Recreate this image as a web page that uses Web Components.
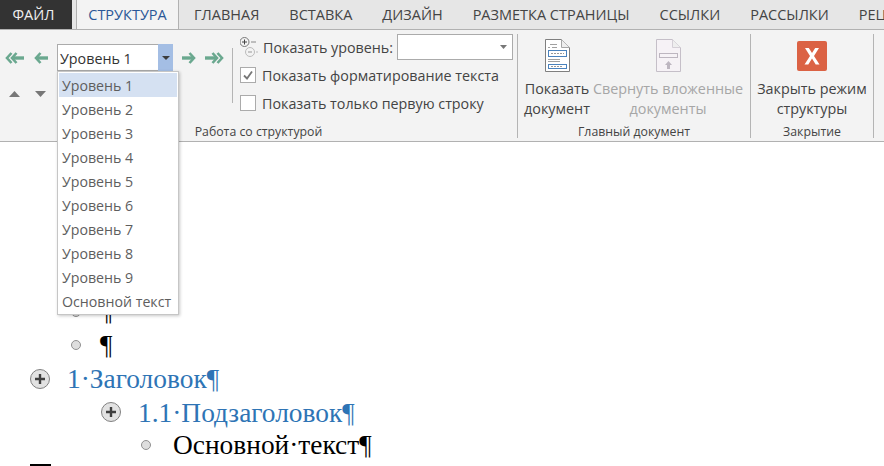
<!DOCTYPE html>
<html lang="ru">
<head>
<meta charset="utf-8">
<title>Структура</title>
<style>
  html, body { margin: 0; height: 100%; overflow: hidden; background: #fff; }
  body { font-family: "Open Sans", "Noto Sans", sans-serif; }
</style>
</head>
<body>
<word-app></word-app>

<script>
const UI_FONT = `"Open Sans", "Noto Sans", sans-serif`;

class WordTabs extends HTMLElement {
  connectedCallback() {
    this.attachShadow({ mode: 'open' });
    const tabs = ['ГЛАВНАЯ', 'ВСТАВКА', 'ДИЗАЙН', 'РАЗМЕТКА СТРАНИЦЫ', 'ССЫЛКИ', 'РАССЫЛКИ', 'РЕЦЕНЗИРОВАНИЕ'];
    this.shadowRoot.innerHTML = `
      <style>
        :host {
          display: flex;
          height: 30px;
          box-sizing: border-box;
          background: #e6e6e6;
          border-bottom: 1px solid #b1b1b1;
          font: 14.5px ${UI_FONT};
          color: #444;
          white-space: nowrap;
          overflow: hidden;
        }
        .file, .active, .tab { flex: none; }
        .file {
          width: 72px;
          height: 29px;
          box-sizing: border-box;
          padding-right: 5px;
          background: #333;
          color: #f0f0f0;
          display: flex;
          align-items: center;
          justify-content: center;
          margin-right: 4px;
        }
        .active {
          width: 103px;
          height: 30px;
          box-sizing: border-box;
          background: #f3f3f3;
          border: 1px solid #b1b1b1;
          border-width: 0 1px;
          color: #2b5797;
          display: flex;
          align-items: center;
          justify-content: center;
          padding-bottom: 1px;
        }
        .tab {
          display: flex;
          align-items: center;
          padding: 0 15px;
        }
      </style>
      <div class="file">ФАЙЛ</div>
      <div class="active">СТРУКТУРА</div>
      ${tabs.map(t => `<div class="tab">${t}</div>`).join('')}
    `;
  }
}
customElements.define('word-tabs', WordTabs);

class RibbonGroup extends HTMLElement {
  connectedCallback() {
    this.attachShadow({ mode: 'open' });
    this.shadowRoot.innerHTML = `
      <style>
        :host {
          display: flex;
          flex-direction: column;
          box-sizing: border-box;
          height: 104px;
          margin-top: 4px;
          border-right: 1px solid #b4b4b4;
        }
        .body { flex: 1; display: flex; min-height: 0; }
        .label {
          height: 13px;
          padding-top: 1px;
          line-height: 14px;
          text-align: center;
          font-size: 12.300px;
          color: #444;
          white-space: nowrap;
        }
      </style>
      <div class="body"><slot></slot></div>
      <div class="label">${this.getAttribute('label')}</div>
    `;
  }
}
customElements.define('ribbon-group', RibbonGroup);

class RibbonButton extends HTMLElement {
  connectedCallback() {
    this.attachShadow({ mode: 'open' });
    const disabled = this.hasAttribute('disabled');
    this.shadowRoot.innerHTML = `
      <style>
        :host {
          display: flex;
          flex-direction: column;
          align-items: center;
          font-size: 14.350px;
          line-height: 20px;
          color: ${disabled ? '#a6a6a6' : '#444'};
          text-align: center;
          white-space: nowrap;
        }
        .icon { height: 40px; padding-top: 5px; display: flex; justify-content: center; box-sizing: content-box; }
      </style>
      <div class="icon"><slot name="icon"></slot></div>
      <div><slot></slot></div>
    `;
  }
}
customElements.define('ribbon-button', RibbonButton);

class OutlineTools extends HTMLElement {
  connectedCallback() {
    this.attachShadow({ mode: 'open' });
    this.shadowRoot.innerHTML = `
      <style>
        :host {
          display: block;
          position: relative;
          width: 232px;
          height: 100%;
          box-sizing: border-box;
          font-size: 14.300px;
          color: #333;
        }
        .row { display: flex; align-items: center; }
        .top { padding: 10px 0 0 5px; }
        .bottom { padding: 20px 0 0 9px; gap: 15px; }
        .combo {
          width: 116px;
          height: 27px;
          margin: 0 9px 0 9px;
          box-sizing: border-box;
          background: #fff;
          border: 1px solid #ababab;
          display: flex;
          align-items: center;
          padding: 1px 0 0 2px;
          position: relative;
        }
        .combo span { flex: 1; }
        .drop {
          position: absolute;
          right: -1px;
          top: -1px;
          width: 15px;
          height: 27px;
          background: #a4bee4;
          display: flex;
          align-items: center;
          justify-content: center;
        }
        svg { display: block; }
        .arrow { fill: none; stroke: #6aa88f; }
      </style>
      <div class="row top">
        <svg width="19" height="12" viewBox="0 0 19 12"><g class="arrow" stroke-width="2.600"><path d="M6.500 1 2 6l4.500 5M11.500 1 7 6l4.500 5"/><path d="M8 6h11" stroke-width="3.400"/></g></svg>
        <svg style="margin-left:10px" width="14" height="12" viewBox="0 0 14 12"><g class="arrow" stroke-width="2.600"><path d="M6.500 1 2 6l4.500 5"/><path d="M3 6h11" stroke-width="3.400"/></g></svg>
        <div class="combo"><span>Уровень 1</span><div class="drop"><svg width="8" height="4" viewBox="0 0 8 4"><path d="M0 0h8L4 4z" fill="#3c3c3c"/></svg></div></div>
        <svg width="14" height="12" viewBox="0 0 14 12"><g class="arrow" stroke-width="2.600"><path d="M7.500 1 12 6l-4.500 5"/><path d="M0 6h11" stroke-width="3.400"/></g></svg>
        <svg style="margin-left:9px" width="19" height="12" viewBox="0 0 19 12"><g class="arrow" stroke-width="2.600"><path d="M7.500 1 12 6l-4.500 5M12.500 1 17 6l-4.500 5"/><path d="M0 6h11" stroke-width="3.400"/></g></svg>
      </div>
      <div class="row bottom">
        <svg width="11" height="6" viewBox="0 0 11 6"><path d="M0 6 5.500 0 11 6z" fill="#777"/></svg>
        <svg width="11" height="6" viewBox="0 0 11 6"><path d="M0 0h11L5.500 6z" fill="#777"/></svg>
      </div>
      <slot></slot>
    `;
  }
}
customElements.define('outline-tools', OutlineTools);

class LevelMenu extends HTMLElement {
  connectedCallback() {
    this.attachShadow({ mode: 'open' });
    const items = ['Уровень 1', 'Уровень 2', 'Уровень 3', 'Уровень 4', 'Уровень 5', 'Уровень 6', 'Уровень 7', 'Уровень 8', 'Уровень 9', 'Основной текст'];
    this.shadowRoot.innerHTML = `
      <style>
        :host {
          display: block;
          position: absolute;
          left: 57px;
          top: 71px;
          width: 122px;
          height: 244px;
          box-sizing: border-box;
          background: #fff;
          border: 1px solid #c6c6c6;
          padding: 1px;
          box-shadow: 1px 1px 3px rgba(0, 0, 0, 0.22);
          font: 14.200px ${UI_FONT};
          color: #5e5e5e;
          z-index: 10;
        }
        .item {
          height: 24px;
          line-height: 25px;
          padding-left: 3px;
          white-space: nowrap;
        }
        .sel { background: #d5e1f2; }
      </style>
      ${items.map((t, i) => `<div class="item${i === 0 ? ' sel' : ''}">${t}</div>`).join('')}
    `;
  }
}
customElements.define('level-menu', LevelMenu);

class ShowOptions extends HTMLElement {
  connectedCallback() {
    this.attachShadow({ mode: 'open' });
    this.shadowRoot.innerHTML = `
      <style>
        :host {
          display: flex;
          flex-direction: column;
          box-sizing: border-box;
          width: 285px;
          border-left: 1px solid #b4b4b4;
          height: 55px;
          margin-top: 14px;
          position: relative;
          font-size: 14.300px;
          color: #444;
          white-space: nowrap;
        }
        .rows {
          position: absolute;
          left: 7px;
          top: -14px;
          display: flex;
          flex-direction: column;
        }
        .row { display: flex; align-items: center; }
        .level { height: 26px; margin-top: 0; }
        .level span { margin-left: 5px; }
        .combo {
          width: 116px;
          height: 26px;
          box-sizing: border-box;
          margin-left: 4px;
          background: #fff;
          border: 1px solid #ababab;
          display: flex;
          justify-content: flex-end;
          align-items: center;
          padding-right: 5px;
        }
        .check {
          height: 28px;
          gap: 6px;
        }
        .first { margin-top: 1px; }
        .box {
          width: 16px;
          height: 16px;
          box-sizing: border-box;
          background: #fff;
          border: 1px solid #ababab;
        }
        svg { display: block; }
      </style>
      <div class="rows">
        <div class="row level">
          <svg width="18" height="20" viewBox="0 0 18 20">
            <circle cx="4.500" cy="5" r="4.500" fill="#f3f3f3" stroke="#777"/>
            <path d="M2 5h5M4.500 2.500v5" stroke="#444"/>
            <path d="M11 5h5" stroke="#888"/>
            <circle cx="10" cy="15" r="4.500" fill="#f3f3f3" stroke="#bbb"/>
            <path d="M8 15h4" stroke="#999"/>
            <path d="M16 15h3" stroke="#bbb"/>
          </svg>
          <span>Показать уровень:</span>
          <div class="combo"><svg width="7" height="4" viewBox="0 0 7 4"><path d="M0 0h7L3.500 4z" fill="#777"/></svg></div>
        </div>
        <div class="row check first">
          <div class="box"><svg width="14" height="14" viewBox="0 0 14 14"><path d="M3 7.500 6 10.500 11 3.500" fill="none" stroke="#777" stroke-width="1.800"/></svg></div>
          <span>Показать форматирование текста</span>
        </div>
        <div class="row check">
          <div class="box"></div>
          <span>Показать только первую строку</span>
        </div>
      </div>
    `;
  }
}
customElements.define('show-options', ShowOptions);

class WordRibbon extends HTMLElement {
  connectedCallback() {
    this.attachShadow({ mode: 'open' });
    this.shadowRoot.innerHTML = `
      <style>
        :host {
          display: flex;
          height: 112px;
          box-sizing: border-box;
          background: #f3f3f3;
          border-bottom: 1px solid #b1b1b1;
          font-family: ${UI_FONT};
        }
        .g1 { width: 518px; }
        .g2 { width: 233px; }
        .g3 { width: 123px; }
        .b1 { width: 72px; margin-left: 3px; }
        .b2 { width: 150px; }
        .b3 { width: 122px; }
        svg { display: block; }
      </style>
      <ribbon-group class="g1" label="Работа со структурой">
        <outline-tools></outline-tools>
        <show-options></show-options>
      </ribbon-group>
      <ribbon-group class="g2" label="Главный документ">
        <ribbon-button class="b1">
          <svg slot="icon" width="25" height="33" viewBox="0 0 25 33">
            <path d="M.500.500h16l8 8v24H.500z" fill="#fff" stroke="#7f7f7f"/>
            <path d="M16.500.500v8h8" fill="#eee" stroke="#a6a6a6"/>
            <path d="M5 5.500h7M3 8.500h2M7 8.500h5M3 20.500h12M3 22.500h12M5 25.500h5" stroke="#a0a0a0"/>
            <rect x="3.500" y="11.500" width="18" height="6" fill="#fff" stroke="#4a82bd"/>
            <rect x="3.500" y="25.500" width="18" height="4" fill="#fff" stroke="#4a82bd"/>
            <path d="M6 14.500h13M6 27.500h12" stroke="#999" stroke-dasharray="2 1"/>
          </svg>
          Показать<br>документ
        </ribbon-button>
        <ribbon-button class="b2" disabled>
          <svg slot="icon" width="25" height="33" viewBox="0 0 25 33">
            <path d="M.500.500h16l8 8v24H.500z" fill="#f6f2f6" stroke="#c5bfc8"/>
            <path d="M16.500.500v8h8" fill="#eee" stroke="#d4cfd6"/>
            <rect x="3.500" y="14.500" width="18" height="4" fill="#f6f2f6" stroke="#bdb6c0"/>
            <path d="M12.500 22 16 26h-2v4h-3v-4H9z" fill="#bdb6c0"/>
          </svg>
          Свернуть вложенные<br>документы
        </ribbon-button>
      </ribbon-group>
      <ribbon-group class="g3" label="Закрытие">
        <ribbon-button class="b3">
          <svg slot="icon" width="30" height="30" viewBox="0 0 30 30" style="margin-top:2px;margin-bottom:1px">
            <rect width="30" height="30" rx="2" fill="#db6244"/>
            <path d="M8 7h3.800L15 12l3.200-5H22l-5 8 5.500 8.500h-3.800L15 17.500 11.300 23.500H7.500l5.500-8.500z" fill="#fff"/>
          </svg>
          Закрыть режим<br>структуры
        </ribbon-button>
      </ribbon-group>
    `;
  }
}
customElements.define('word-ribbon', WordRibbon);

class OutlineRow extends HTMLElement {
  connectedCallback() {
    this.attachShadow({ mode: 'open' });
    const marker = this.getAttribute('marker');
    const heading = this.hasAttribute('heading');
    const plus = `<svg width="20" height="20" viewBox="0 0 20 20"><circle cx="10" cy="10" r="9.500" fill="#e2e2e2" stroke="#808080"/><path d="M5 10h10M10 5v10" stroke="#3f3f3f" stroke-width="2.400"/></svg>`;
    const dot = `<svg width="10" height="10" viewBox="0 0 10 10"><circle cx="5" cy="5" r="4.500" fill="#dedede" stroke="#909090"/></svg>`;
    this.shadowRoot.innerHTML = `
      <style>
        :host {
          display: flex;
          align-items: center;
          height: 33.400px;
          padding-left: var(--indent, 0);
          font: 27.400px "Liberation Serif", serif;
          color: ${heading ? '#2e74b5' : '#000'};
          white-space: nowrap;
        }
        .marker { display: flex; width: var(--mark, 37px); flex: none; }
        .text { padding-top: ${heading ? '2px' : '0'}; }
        svg { display: block; }
      </style>
      <div class="marker">${marker === 'plus' ? plus : dot}</div>
      <div class="text"><slot></slot></div>
    `;
  }
}
customElements.define('outline-row', OutlineRow);

class OutlineDoc extends HTMLElement {
  connectedCallback() {
    this.attachShadow({ mode: 'open' });
    this.shadowRoot.innerHTML = `
      <style>
        :host {
          display: block;
          height: 324px;
          box-sizing: border-box;
          padding-top: 153.200px;
          background: #fff;
          overflow: hidden;
        }
        .end { width: 21px; height: 2px; margin: 2px 0 0 30px; background: #000; }
      </style>
      <slot></slot>
      <div class="end"></div>
    `;
  }
}
customElements.define('outline-doc', OutlineDoc);

class WordApp extends HTMLElement {
  connectedCallback() {
    this.attachShadow({ mode: 'open' });
    this.shadowRoot.innerHTML = `
      <style>
        :host { display: block; position: relative; width: 884px; height: 466px; overflow: hidden; }
        word-tabs, word-ribbon, outline-doc { width: 884px; }
      </style>
      <word-tabs></word-tabs>
      <word-ribbon></word-ribbon>
      <outline-doc>
        <outline-row marker="dot" style="--indent:71px;--mark:29px">¶</outline-row>
        <outline-row marker="dot" style="--indent:71px;--mark:29px">¶</outline-row>
        <outline-row marker="plus" heading style="--indent:30px;--mark:37px">1·Заголовок¶</outline-row>
        <outline-row marker="plus" heading style="--indent:101px;--mark:37px">1.1·Подзаголовок¶</outline-row>
        <outline-row marker="dot" style="--indent:141px;--mark:32px">Основной·текст¶</outline-row>
      </outline-doc>
      <level-menu></level-menu>
    `;
  }
}
customElements.define('word-app', WordApp);
</script>
</body>
</html>
